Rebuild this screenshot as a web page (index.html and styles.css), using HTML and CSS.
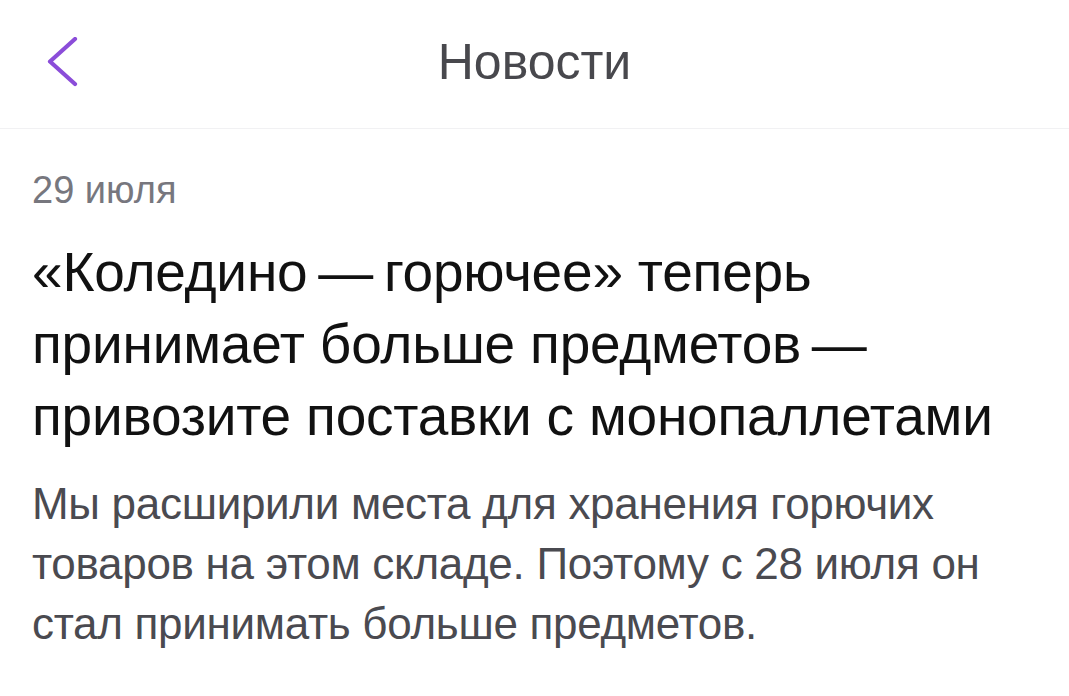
FILE: index.html
```html
<!DOCTYPE html>
<html lang="ru">
<head>
    <meta charset="UTF-8">
    <title>Новости</title>
    <link rel="stylesheet" href="styles.css">
</head>
<body>
    <div class="topbar">
        <a class="back" href="#">
            <svg width="34" height="52" viewBox="0 0 34 52">
                <polyline points="29,2 4,24.5 29,47" fill="none" stroke="#8b4dd9" stroke-width="4.2" stroke-linecap="round" stroke-linejoin="round"/>
            </svg>
        </a>
        <div class="topbar-title">Новости</div>
    </div>

    <div class="news">
        <div class="news-date">29 июля</div>
        <h1 class="news-title">«Коледино&thinsp;—&thinsp;горючее» теперь принимает больше предметов&thinsp;— привозите поставки с монопаллетами</h1>
        <p class="news-text">Мы расширили места для хранения горючих товаров на этом складе. Поэтому с 28 июля он стал принимать больше предметов.</p>
    </div>
</body>
</html>
```

FILE: styles.css
```css
* {
    box-sizing: border-box;
}

body {
    margin: 0;
    background-color: #ffffff;
    font-family: "Liberation Sans", Roboto, sans-serif;
}

.topbar {
    position: relative;
    height: 129px;
    display: flex;
    align-items: center;
    justify-content: center;
    border-bottom: 1px solid #f1f1f3;
}

.back {
    position: absolute;
    left: 46px;
    top: 37px;
    display: block;
}

.topbar-title {
    font-size: 50px;
    color: #48484d;
    margin-top: -4px;
}

.news {
    padding: 37px 32px 0 32px;
}

.news-date {
    font-size: 38px;
    color: #77777e;
    line-height: 48px;
}

.news-title {
    margin: 22px 0 0 0;
    font-size: 55px;
    font-weight: 400;
    line-height: 72px;
    letter-spacing: -0.2px;
    color: #111111;
}

.news-text {
    margin: 22px 0 0 0;
    font-size: 44px;
    line-height: 60px;
    letter-spacing: -0.3px;
    color: #4a4a50;
}
```
